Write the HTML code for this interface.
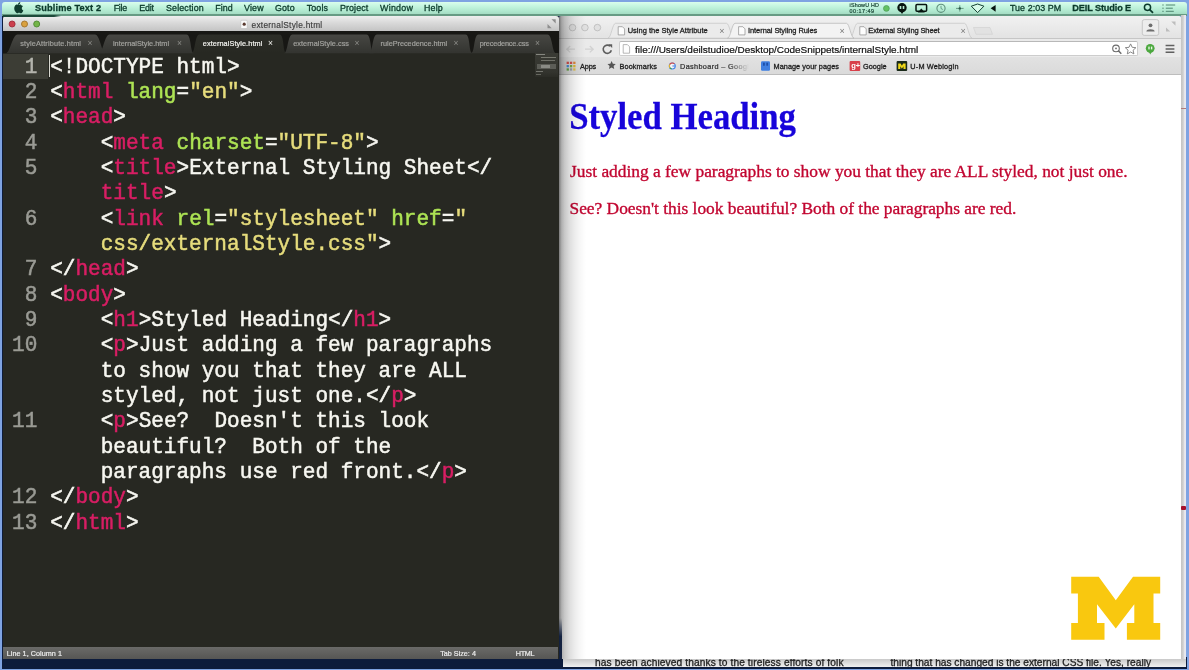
<!DOCTYPE html>
<html lang="en">
<head>
<meta charset="UTF-8">
<title>External Styling Sheet</title>
<style>
html,body{margin:0;padding:0}
body{width:1189px;height:670px;overflow:hidden;position:relative;background:#7ea2e2}
.t{position:absolute;white-space:pre;margin:0}
.b{position:absolute}
.sa{font-family:"Liberation Sans",sans-serif}
.se{font-family:"Liberation Serif",serif}
.mo{font-family:"Liberation Mono",monospace}
svg{position:absolute;overflow:visible}
#root{position:absolute;left:0;top:0;width:1189px;height:670px;overflow:hidden;filter:blur(0.62px)}
</style>
</head>
<body>
<div id="root">
<div class="b" style="left:0.00px;top:0.00px;width:1189.00px;height:670.00px;background:#7fa3e2"></div>
<div class="b" style="left:2.00px;top:15.00px;width:557.00px;height:653.50px;background:#0d1c3c"></div>
<div class="b" style="left:556.00px;top:657.00px;width:631.00px;height:11.50px;background:#0d1c3c"></div>
<div class="b" style="left:2.00px;top:2.00px;width:1185.00px;height:12.30px;background:linear-gradient(#dafdec 0%,#c4f5df 35%,#b0e8cf 75%,#a4dcc3 100%);border-bottom:2.6px solid #679b84;border-radius:3px 3px 0 0"></div>
<div class="b" style="left:3.30px;top:16.00px;width:556.00px;height:643.00px;background:#272822;border-radius:3px 3px 0 0"></div>
<div class="b" style="left:3.30px;top:16.00px;width:555.40px;height:15.00px;background:linear-gradient(#efefef,#d9d9d9 45%,#c4c4c4);border-radius:3px 3px 0 0"></div>
<div class="b" style="left:3.30px;top:31.00px;width:556.00px;height:22.00px;background:#171714"></div>
<div class="b" style="left:3.30px;top:53.00px;width:556.00px;height:594.00px;background:#272822"></div>
<div class="b" style="left:3.30px;top:647.00px;width:555.20px;height:12.00px;background:linear-gradient(#6a6a68,#565654)"></div>
<div class="b" style="left:558.50px;top:16.00px;width:622.50px;height:642.50px;background:#fff;border-radius:3px 3px 0 0"></div>
<div class="b" style="left:558.50px;top:16.00px;width:622.50px;height:22.00px;background:linear-gradient(#f1f1f1,#e3e3e3);border-radius:3px 3px 0 0"></div>
<div class="b" style="left:558.50px;top:37.60px;width:622.50px;height:18.90px;background:#eaeaea;border-top:1px solid #c6c6c6"></div>
<div class="b" style="left:558.50px;top:56.50px;width:622.50px;height:17.00px;background:linear-gradient(#e2e2e2,#dadada);border-bottom:1px solid #bdbdbd"></div>
<div class="b" style="left:1180.70px;top:15.00px;width:5.60px;height:651.50px;background:linear-gradient(90deg,#c4c4c4 0%,#cfcfcf 45%,#e4e4ea 62%,#ebebf1 100%)"></div>
<div class="b" style="left:1180.80px;top:505.90px;width:5.50px;height:4.00px;background:#a5122d;border-radius:1px"></div>
<div class="b" style="left:1181.00px;top:107.60px;width:5.30px;height:1.80px;background:#b07a7a"></div>
<div class="b" style="left:563.00px;top:659.00px;width:623.00px;height:7.80px;background:linear-gradient(#c9c9c9,#f0f0f0)"></div>
<div class="b" style="left:3.30px;top:53.50px;width:45.00px;height:25.00px;background:#3c3d35"></div>
<div class="b" style="left:49.30px;top:55.00px;width:1.00px;height:22.00px;background:#d8d8d0"></div>
<div class="t mo" style="left:24.67px;top:54.79px;font-size:21.05px;line-height:25px;color:#b4b5ad;letter-spacing:-0.002px;transform-origin:0 18.11px;transform:scaleY(1.06);-webkit-text-stroke:0.5px;">1</div>
<div class="t mo" style="left:50.20px;top:54.79px;font-size:21.05px;line-height:25px;color:#f7f7f1;letter-spacing:-0.002px;transform-origin:0 18.11px;transform:scaleY(1.06);-webkit-text-stroke:0.5px;"><span style="color:#f7f7f1">&lt;!DOCTYPE html&gt;</span></div>
<div class="t mo" style="left:24.67px;top:80.13px;font-size:21.05px;line-height:25px;color:#9a9b95;letter-spacing:-0.002px;transform-origin:0 18.11px;transform:scaleY(1.06);-webkit-text-stroke:0.5px;">2</div>
<div class="t mo" style="left:50.20px;top:80.13px;font-size:21.05px;line-height:25px;color:#f7f7f1;letter-spacing:-0.002px;transform-origin:0 18.11px;transform:scaleY(1.06);-webkit-text-stroke:0.5px;"><span style="color:#f7f7f1">&lt;</span><span style="color:#d81e64">html</span><span style="color:#f7f7f1"> </span><span style="color:#ade354">lang</span><span style="color:#f7f7f1">=</span><span style="color:#e6dc7c">"en"</span><span style="color:#f7f7f1">&gt;</span></div>
<div class="t mo" style="left:24.67px;top:105.46px;font-size:21.05px;line-height:25px;color:#9a9b95;letter-spacing:-0.002px;transform-origin:0 18.11px;transform:scaleY(1.06);-webkit-text-stroke:0.5px;">3</div>
<div class="t mo" style="left:50.20px;top:105.46px;font-size:21.05px;line-height:25px;color:#f7f7f1;letter-spacing:-0.002px;transform-origin:0 18.11px;transform:scaleY(1.06);-webkit-text-stroke:0.5px;"><span style="color:#f7f7f1">&lt;</span><span style="color:#d81e64">head</span><span style="color:#f7f7f1">&gt;</span></div>
<div class="t mo" style="left:24.67px;top:130.80px;font-size:21.05px;line-height:25px;color:#9a9b95;letter-spacing:-0.002px;transform-origin:0 18.11px;transform:scaleY(1.06);-webkit-text-stroke:0.5px;">4</div>
<div class="t mo" style="left:100.72px;top:130.80px;font-size:21.05px;line-height:25px;color:#f7f7f1;letter-spacing:-0.002px;transform-origin:0 18.11px;transform:scaleY(1.06);-webkit-text-stroke:0.5px;"><span style="color:#f7f7f1">&lt;</span><span style="color:#d81e64">meta</span><span style="color:#f7f7f1"> </span><span style="color:#ade354">charset</span><span style="color:#f7f7f1">=</span><span style="color:#e6dc7c">"UTF-8"</span><span style="color:#f7f7f1">&gt;</span></div>
<div class="t mo" style="left:24.67px;top:156.13px;font-size:21.05px;line-height:25px;color:#9a9b95;letter-spacing:-0.002px;transform-origin:0 18.11px;transform:scaleY(1.06);-webkit-text-stroke:0.5px;">5</div>
<div class="t mo" style="left:100.72px;top:156.13px;font-size:21.05px;line-height:25px;color:#f7f7f1;letter-spacing:-0.002px;transform-origin:0 18.11px;transform:scaleY(1.06);-webkit-text-stroke:0.5px;"><span style="color:#f7f7f1">&lt;</span><span style="color:#d81e64">title</span><span style="color:#f7f7f1">&gt;External Styling Sheet&lt;/</span></div>
<div class="t mo" style="left:100.72px;top:181.47px;font-size:21.05px;line-height:25px;color:#f7f7f1;letter-spacing:-0.002px;transform-origin:0 18.11px;transform:scaleY(1.06);-webkit-text-stroke:0.5px;"><span style="color:#d81e64">title</span><span style="color:#f7f7f1">&gt;</span></div>
<div class="t mo" style="left:24.67px;top:206.80px;font-size:21.05px;line-height:25px;color:#9a9b95;letter-spacing:-0.002px;transform-origin:0 18.11px;transform:scaleY(1.06);-webkit-text-stroke:0.5px;">6</div>
<div class="t mo" style="left:100.72px;top:206.80px;font-size:21.05px;line-height:25px;color:#f7f7f1;letter-spacing:-0.002px;transform-origin:0 18.11px;transform:scaleY(1.06);-webkit-text-stroke:0.5px;"><span style="color:#f7f7f1">&lt;</span><span style="color:#d81e64">link</span><span style="color:#f7f7f1"> </span><span style="color:#ade354">rel</span><span style="color:#f7f7f1">=</span><span style="color:#e6dc7c">"stylesheet"</span><span style="color:#f7f7f1"> </span><span style="color:#ade354">href</span><span style="color:#f7f7f1">=</span><span style="color:#e6dc7c">"</span></div>
<div class="t mo" style="left:100.72px;top:232.14px;font-size:21.05px;line-height:25px;color:#f7f7f1;letter-spacing:-0.002px;transform-origin:0 18.11px;transform:scaleY(1.06);-webkit-text-stroke:0.5px;"><span style="color:#e6dc7c">css/externalStyle.css"</span><span style="color:#f7f7f1">&gt;</span></div>
<div class="t mo" style="left:24.67px;top:257.47px;font-size:21.05px;line-height:25px;color:#9a9b95;letter-spacing:-0.002px;transform-origin:0 18.11px;transform:scaleY(1.06);-webkit-text-stroke:0.5px;">7</div>
<div class="t mo" style="left:50.20px;top:257.47px;font-size:21.05px;line-height:25px;color:#f7f7f1;letter-spacing:-0.002px;transform-origin:0 18.11px;transform:scaleY(1.06);-webkit-text-stroke:0.5px;"><span style="color:#f7f7f1">&lt;/</span><span style="color:#d81e64">head</span><span style="color:#f7f7f1">&gt;</span></div>
<div class="t mo" style="left:24.67px;top:282.81px;font-size:21.05px;line-height:25px;color:#9a9b95;letter-spacing:-0.002px;transform-origin:0 18.11px;transform:scaleY(1.06);-webkit-text-stroke:0.5px;">8</div>
<div class="t mo" style="left:50.20px;top:282.81px;font-size:21.05px;line-height:25px;color:#f7f7f1;letter-spacing:-0.002px;transform-origin:0 18.11px;transform:scaleY(1.06);-webkit-text-stroke:0.5px;"><span style="color:#f7f7f1">&lt;</span><span style="color:#d81e64">body</span><span style="color:#f7f7f1">&gt;</span></div>
<div class="t mo" style="left:24.67px;top:308.14px;font-size:21.05px;line-height:25px;color:#9a9b95;letter-spacing:-0.002px;transform-origin:0 18.11px;transform:scaleY(1.06);-webkit-text-stroke:0.5px;">9</div>
<div class="t mo" style="left:100.72px;top:308.14px;font-size:21.05px;line-height:25px;color:#f7f7f1;letter-spacing:-0.002px;transform-origin:0 18.11px;transform:scaleY(1.06);-webkit-text-stroke:0.5px;"><span style="color:#f7f7f1">&lt;</span><span style="color:#d81e64">h1</span><span style="color:#f7f7f1">&gt;Styled Heading&lt;/</span><span style="color:#d81e64">h1</span><span style="color:#f7f7f1">&gt;</span></div>
<div class="t mo" style="left:12.04px;top:333.48px;font-size:21.05px;line-height:25px;color:#9a9b95;letter-spacing:-0.002px;transform-origin:0 18.11px;transform:scaleY(1.06);-webkit-text-stroke:0.5px;">10</div>
<div class="t mo" style="left:100.72px;top:333.48px;font-size:21.05px;line-height:25px;color:#f7f7f1;letter-spacing:-0.002px;transform-origin:0 18.11px;transform:scaleY(1.06);-webkit-text-stroke:0.5px;"><span style="color:#f7f7f1">&lt;</span><span style="color:#d81e64">p</span><span style="color:#f7f7f1">&gt;Just adding a few paragraphs</span></div>
<div class="t mo" style="left:100.72px;top:358.81px;font-size:21.05px;line-height:25px;color:#f7f7f1;letter-spacing:-0.002px;transform-origin:0 18.11px;transform:scaleY(1.06);-webkit-text-stroke:0.5px;"><span style="color:#f7f7f1">to show you that they are ALL</span></div>
<div class="t mo" style="left:100.72px;top:384.15px;font-size:21.05px;line-height:25px;color:#f7f7f1;letter-spacing:-0.002px;transform-origin:0 18.11px;transform:scaleY(1.06);-webkit-text-stroke:0.5px;"><span style="color:#f7f7f1">styled, not just one.&lt;/</span><span style="color:#d81e64">p</span><span style="color:#f7f7f1">&gt;</span></div>
<div class="t mo" style="left:12.04px;top:409.48px;font-size:21.05px;line-height:25px;color:#9a9b95;letter-spacing:-0.002px;transform-origin:0 18.11px;transform:scaleY(1.06);-webkit-text-stroke:0.5px;">11</div>
<div class="t mo" style="left:100.72px;top:409.48px;font-size:21.05px;line-height:25px;color:#f7f7f1;letter-spacing:-0.002px;transform-origin:0 18.11px;transform:scaleY(1.06);-webkit-text-stroke:0.5px;"><span style="color:#f7f7f1">&lt;</span><span style="color:#d81e64">p</span><span style="color:#f7f7f1">&gt;See?  Doesn't this look</span></div>
<div class="t mo" style="left:100.72px;top:434.82px;font-size:21.05px;line-height:25px;color:#f7f7f1;letter-spacing:-0.002px;transform-origin:0 18.11px;transform:scaleY(1.06);-webkit-text-stroke:0.5px;"><span style="color:#f7f7f1">beautiful?  Both of the</span></div>
<div class="t mo" style="left:100.72px;top:460.15px;font-size:21.05px;line-height:25px;color:#f7f7f1;letter-spacing:-0.002px;transform-origin:0 18.11px;transform:scaleY(1.06);-webkit-text-stroke:0.5px;"><span style="color:#f7f7f1">paragraphs use red front.&lt;/</span><span style="color:#d81e64">p</span><span style="color:#f7f7f1">&gt;</span></div>
<div class="t mo" style="left:12.04px;top:485.49px;font-size:21.05px;line-height:25px;color:#9a9b95;letter-spacing:-0.002px;transform-origin:0 18.11px;transform:scaleY(1.06);-webkit-text-stroke:0.5px;">12</div>
<div class="t mo" style="left:50.20px;top:485.49px;font-size:21.05px;line-height:25px;color:#f7f7f1;letter-spacing:-0.002px;transform-origin:0 18.11px;transform:scaleY(1.06);-webkit-text-stroke:0.5px;"><span style="color:#f7f7f1">&lt;/</span><span style="color:#d81e64">body</span><span style="color:#f7f7f1">&gt;</span></div>
<div class="t mo" style="left:12.04px;top:510.82px;font-size:21.05px;line-height:25px;color:#9a9b95;letter-spacing:-0.002px;transform-origin:0 18.11px;transform:scaleY(1.06);-webkit-text-stroke:0.5px;">13</div>
<div class="t mo" style="left:50.20px;top:510.82px;font-size:21.05px;line-height:25px;color:#f7f7f1;letter-spacing:-0.002px;transform-origin:0 18.11px;transform:scaleY(1.06);-webkit-text-stroke:0.5px;"><span style="color:#f7f7f1">&lt;/</span><span style="color:#d81e64">html</span><span style="color:#f7f7f1">&gt;</span></div>
<div class="t se" style="left:569.20px;top:95.33px;font-size:34.8px;line-height:45.24px;color:#1804da;font-weight:bold;letter-spacing:-0.030px;-webkit-text-stroke:0.25px;transform-origin:0 34.37px;transform:scaleY(1.06);">Styled Heading</div>
<div class="t se" style="left:570.00px;top:160.22px;font-size:17.4px;line-height:22.62px;color:#c20631;letter-spacing:-0.007px;-webkit-text-stroke:0.35px;">Just adding a few paragraphs to show you that they are ALL styled, not just one.</div>
<div class="t se" style="left:569.50px;top:197.32px;font-size:17.4px;line-height:22.62px;color:#c20631;letter-spacing:-0.017px;-webkit-text-stroke:0.35px;">See? Doesn't this look beautiful? Both of the paragraphs are red.</div>
<svg width="1189" height="670" style="left:0;top:0"><polygon fill="#f9c80f" points="1071.2,576.8 1098.7,576.8 1115.8,600.3 1133.0,576.8 1160.2,576.8 1160.2,593.6 1153.5,593.6 1153.5,622.9 1160.2,622.9 1160.2,639.7 1126.9,639.7 1126.9,622.9 1134.3,622.9 1134.3,604.3 1115.8,628.5 1097.0,604.3 1097.0,622.9 1104.5,622.9 1104.5,639.7 1071.2,639.7 1071.2,622.9 1077.9,622.9 1077.9,593.6 1071.2,593.6"/></svg>
<div class="t sa" style="left:35.00px;top:3.03px;font-size:9.2px;line-height:11.96px;color:#0b3a2b;font-weight:bold;letter-spacing:0.141px;-webkit-text-stroke:0.3px;transform-origin:0 9.17px;transform:scaleY(0.98);">Sublime Text 2</div>
<div class="t sa" style="left:113.70px;top:3.33px;font-size:8.9px;line-height:11.57px;color:#0b3a2b;letter-spacing:-0.271px;-webkit-text-stroke:0.3px;transform-origin:0 8.87px;transform:scaleY(1.1);">File</div>
<div class="t sa" style="left:139.30px;top:3.33px;font-size:8.9px;line-height:11.57px;color:#0b3a2b;letter-spacing:-0.199px;-webkit-text-stroke:0.3px;transform-origin:0 8.87px;transform:scaleY(1.1);">Edit</div>
<div class="t sa" style="left:166.00px;top:3.33px;font-size:8.9px;line-height:11.57px;color:#0b3a2b;letter-spacing:0.148px;-webkit-text-stroke:0.3px;transform-origin:0 8.87px;transform:scaleY(1.1);">Selection</div>
<div class="t sa" style="left:215.20px;top:3.33px;font-size:8.9px;line-height:11.57px;color:#0b3a2b;letter-spacing:0.078px;-webkit-text-stroke:0.3px;transform-origin:0 8.87px;transform:scaleY(1.1);">Find</div>
<div class="t sa" style="left:244.10px;top:3.33px;font-size:8.9px;line-height:11.57px;color:#0b3a2b;letter-spacing:0.141px;-webkit-text-stroke:0.3px;transform-origin:0 8.87px;transform:scaleY(1.1);">View</div>
<div class="t sa" style="left:275.00px;top:3.33px;font-size:8.9px;line-height:11.57px;color:#0b3a2b;letter-spacing:0.117px;-webkit-text-stroke:0.3px;transform-origin:0 8.87px;transform:scaleY(1.1);">Goto</div>
<div class="t sa" style="left:306.70px;top:3.33px;font-size:8.9px;line-height:11.57px;color:#0b3a2b;letter-spacing:0.145px;-webkit-text-stroke:0.3px;transform-origin:0 8.87px;transform:scaleY(1.1);">Tools</div>
<div class="t sa" style="left:340.00px;top:3.33px;font-size:8.9px;line-height:11.57px;color:#0b3a2b;letter-spacing:0.096px;-webkit-text-stroke:0.3px;transform-origin:0 8.87px;transform:scaleY(1.1);">Project</div>
<div class="t sa" style="left:380.00px;top:3.33px;font-size:8.9px;line-height:11.57px;color:#0b3a2b;letter-spacing:0.264px;-webkit-text-stroke:0.3px;transform-origin:0 8.87px;transform:scaleY(1.1);">Window</div>
<div class="t sa" style="left:424.00px;top:3.33px;font-size:8.9px;line-height:11.57px;color:#0b3a2b;letter-spacing:0.145px;-webkit-text-stroke:0.3px;transform-origin:0 8.87px;transform:scaleY(1.1);">Help</div>
<div class="t sa" style="left:1009.90px;top:3.33px;font-size:8.9px;line-height:11.57px;color:#0b3a2b;letter-spacing:0.082px;-webkit-text-stroke:0.3px;transform-origin:0 8.87px;transform:scaleY(1.1);">Tue 2:03 PM</div>
<div class="t sa" style="left:1072.30px;top:3.03px;font-size:9.2px;line-height:11.96px;color:#0b3a2b;font-weight:bold;letter-spacing:-0.140px;-webkit-text-stroke:0.3px;transform-origin:0 9.17px;transform:scaleY(0.98);">DEIL Studio E</div>
<div class="t sa" style="left:849.50px;top:2.22px;font-size:5.4px;line-height:7.02px;color:#1d4838;letter-spacing:0.205px;-webkit-text-stroke:0.2px;">iShowU HD</div>
<div class="t sa" style="left:849.50px;top:8.02px;font-size:5.4px;line-height:7.02px;color:#1d4838;letter-spacing:0.502px;-webkit-text-stroke:0.2px;">00:17:49</div>
<svg width="1189" height="670" style="left:0;top:0"><path fill="#0f3d2e" d="M19.2,5.3c-1,-.1 -1.7,.5 -2.2,.5c-.5,0 -1.2,-.5 -2,-.5c-1.1,0 -2.1,.7 -2.6,1.7c-1.1,1.9 -.3,4.7 .8,6.2c.5,.7 1.1,1.5 1.9,1.5c.8,0 1.1,-.5 2,-.5c.9,0 1.2,.5 2,.5c.8,0 1.3,-.7 1.8,-1.4c.6,-.8 .8,-1.6 .8,-1.6c0,0 -1.6,-.6 -1.6,-2.4c0,-1.5 1.2,-2.2 1.3,-2.3c-.7,-1 -1.7,-1.1 -2.2,-1.1zM18.4,2.6c-.8,.1 -1.6,.6 -2,1.300c-.4,.6 -.5,1.2 -.4,1.600c.8,0 1.500,-.4 2,-1.100c.4,-.6 .5,-1.200 .4,-1.800z" transform="translate(3.3,-0.3) scale(0.92)"/><circle cx="886.4" cy="8.4" r="2.9" fill="#62c262" stroke="#4a9a58" stroke-width="0.7"/><circle cx="902" cy="7.8" r="4.7" fill="#06140f"/><path d="M900.5,11.5l1.5,2.5l1.5,-2.5z" fill="#06140f"/><rect x="899.7" y="6" width="1.6" height="3" fill="#b8ecd4"/><rect x="902.7" y="6" width="1.6" height="3" fill="#b8ecd4"/><rect x="916" y="4.6" width="10.6" height="6.6" rx="1" fill="none" stroke="#06140f" stroke-width="1.5"/><path d="M917.8,12.6l3.5,-4l3.5,4z" fill="#06140f"/><circle cx="941" cy="8.3" r="4.1" fill="none" stroke="#5f917d" stroke-width="1.1"/><path d="M941,5.8v2.7l1.8,1" fill="none" stroke="#5f917d" stroke-width="0.9"/><path d="M956,8.4h7.6M959.8,5.2v6.4" stroke="#5c8e7a" stroke-width="0.9" fill="none"/><circle cx="959.8" cy="8.4" r="1.2" fill="#2a5a48"/><path d="M971.3,6.2l6.3,-2.2l6.3,2.2l-6.3,6.4z" fill="#d8fbea" stroke="#123f30" stroke-width="1"/><path d="M990.6,8.3l5,-3.4v6.8z" fill="#06140f"/><circle cx="1147.5" cy="7.3" r="3.1" fill="none" stroke="#0b3a2b" stroke-width="1.5"/><path d="M1149.7,9.6l3.3,3.2" stroke="#0b3a2b" stroke-width="1.8"/><path d="M1162.4,5h1.2M1162.4,8.2h1.200M1162.4,11.3h1.200" stroke="#3e725e" stroke-width="1"/><path d="M1165.8,5h9.4M1165.800,8.2h7M1165.8,11.3h8" stroke="#4f8670" stroke-width="1"/></svg>
<div class="b" style="left:3.00px;top:14.60px;width:58.00px;height:2.50px;background:linear-gradient(90deg,#1d4a3a 0%,#1d4a3a 88%,rgba(29,74,58,0) 100%)"></div>
<svg width="1189" height="670" style="left:0;top:0"><circle cx="12.1" cy="24" r="3" fill="#cc3f4d" stroke="#a02c3a" stroke-width="0.9"/><circle cx="24.5" cy="24" r="3" fill="#d9a13f" stroke="#a0722a" stroke-width="0.9"/><circle cx="36.7" cy="24" r="3" fill="#74b548" stroke="#4e8832" stroke-width="0.9"/><rect x="240.8" y="20.3" width="6.4" height="8.2" rx="1" fill="#fafafa" stroke="#b5b5b5" stroke-width="0.5"/><circle cx="244.2" cy="24.2" r="1.6" fill="#5a3a30"/><path d="M551.5,19.3h4.2v4.2zM547.5,28.3h4.2l-4.2,-4.2z" fill="#8e8e8e"/></svg>
<div class="t sa" style="left:251.50px;top:19.53px;font-size:8.3px;line-height:10.79px;color:#3c3c3c;letter-spacing:0.279px;-webkit-text-stroke:0.15px;">externalStyle.html</div>
<svg width="1189" height="670" style="left:0;top:0"><defs><linearGradient id="tg" x1="0" y1="0" x2="0" y2="1"><stop offset="0" stop-color="#474743"/><stop offset="1" stop-color="#333430"/></linearGradient><linearGradient id="ta" x1="0" y1="0" x2="0" y2="1"><stop offset="0" stop-color="#2d2e28"/><stop offset="1" stop-color="#272822"/></linearGradient></defs><path d="M471,53.2C475,53.2 473.5,34.6 478.5,34.6L547.5,34.6C552.5,34.6 552,53.2 556,53.2z" fill="url(#tg)"/><path d="M369,53.2C373,53.2 372,34.6 377,34.6L465.5,34.6C470.5,34.6 468.5,53.2 472.5,53.2z" fill="url(#tg)"/><path d="M284,53.2C288,53.2 287.5,34.6 292.5,34.6L366.5,34.6C371.5,34.6 370,53.2 374,53.2z" fill="url(#tg)"/><path d="M99,53.2C103,53.2 104.5,34.6 109.5,34.6L186.5,34.6C191.5,34.6 190,53.2 194,53.2z" fill="url(#tg)"/><path d="M6,53.2C10,53.2 12.5,34.6 17.5,34.6L95,34.6C100,34.6 101.5,53.2 105.5,53.2z" fill="url(#tg)"/><path d="M191.5,53.2C195.5,53.2 194.5,34.6 199.5,34.6L279.5,34.6C284.5,34.6 282.5,53.2 286.5,53.2z" fill="url(#ta)"/></svg>
<div class="t sa" style="left:20.20px;top:38.73px;font-size:7.3px;line-height:9.49px;color:#a2a29e;letter-spacing:0.156px;-webkit-text-stroke:0.2px;transform-origin:0 7.27px;transform:scaleY(1.05);">styleAttribute.html</div>
<div class="t sa" style="left:87.40px;top:37.93px;font-size:8.5px;line-height:11.05px;color:#8c8c88;">×</div>
<div class="t sa" style="left:113.00px;top:38.73px;font-size:7.3px;line-height:9.49px;color:#a2a29e;letter-spacing:0.002px;-webkit-text-stroke:0.2px;transform-origin:0 7.27px;transform:scaleY(1.05);">internalStyle.html</div>
<div class="t sa" style="left:176.90px;top:37.93px;font-size:8.5px;line-height:11.05px;color:#8c8c88;">×</div>
<div class="t sa" style="left:202.80px;top:38.73px;font-size:7.3px;line-height:9.49px;color:#f4f4f0;letter-spacing:0.088px;-webkit-text-stroke:0.2px;transform-origin:0 7.27px;transform:scaleY(1.05);">externalStyle.html</div>
<div class="t sa" style="left:268.00px;top:37.93px;font-size:8.5px;line-height:11.05px;color:#f4f4f0;">×</div>
<div class="t sa" style="left:293.20px;top:38.73px;font-size:7.3px;line-height:9.49px;color:#a2a29e;letter-spacing:0.040px;-webkit-text-stroke:0.2px;transform-origin:0 7.27px;transform:scaleY(1.05);">externalStyle.css</div>
<div class="t sa" style="left:354.40px;top:37.93px;font-size:8.5px;line-height:11.05px;color:#8c8c88;">×</div>
<div class="t sa" style="left:380.60px;top:38.73px;font-size:7.3px;line-height:9.49px;color:#a2a29e;letter-spacing:-0.019px;-webkit-text-stroke:0.2px;transform-origin:0 7.27px;transform:scaleY(1.05);">rulePrecedence.html</div>
<div class="t sa" style="left:453.40px;top:37.93px;font-size:8.5px;line-height:11.05px;color:#8c8c88;">×</div>
<div class="t sa" style="left:479.70px;top:38.73px;font-size:7.3px;line-height:9.49px;color:#a2a29e;letter-spacing:-0.155px;-webkit-text-stroke:0.2px;transform-origin:0 7.27px;transform:scaleY(1.05);">precedence.css</div>
<div class="t sa" style="left:535.00px;top:37.93px;font-size:8.5px;line-height:11.05px;color:#8c8c88;">×</div>
<div class="b" style="left:535.00px;top:52.80px;width:22.50px;height:24.00px;background:linear-gradient(#3a3b35,#33342e 80%,#2b2c26)"></div>
<div class="b" style="left:535.50px;top:53.60px;width:9.00px;height:1.20px;background:#85867f"></div>
<div class="b" style="left:541.00px;top:57.00px;width:15.00px;height:1.10px;background:#77786f"></div>
<div class="b" style="left:541.00px;top:60.00px;width:13.50px;height:1.10px;background:#6f7068"></div>
<div class="b" style="left:537.00px;top:64.00px;width:19.00px;height:4.60px;background:#5c5d57"></div>
<div class="b" style="left:541.00px;top:65.00px;width:9.00px;height:2.60px;background:#8a8b85"></div>
<div class="b" style="left:535.50px;top:71.40px;width:7.00px;height:1.10px;background:#74756e"></div>
<div class="b" style="left:535.50px;top:74.20px;width:5.00px;height:1.00px;background:#66675f"></div>
<div class="t sa" style="left:6.70px;top:648.83px;font-size:7.2px;line-height:9.36px;color:#ededed;letter-spacing:0.064px;-webkit-text-stroke:0.2px;transform-origin:0 7.17px;transform:scaleY(1.05);">Line 1, Column 1</div>
<div class="t sa" style="left:440.20px;top:648.83px;font-size:7.2px;line-height:9.36px;color:#ededed;letter-spacing:0.014px;-webkit-text-stroke:0.2px;transform-origin:0 7.17px;transform:scaleY(1.05);">Tab Size: 4</div>
<div class="t sa" style="left:515.80px;top:648.83px;font-size:7.2px;line-height:9.36px;color:#ededed;letter-spacing:-0.326px;-webkit-text-stroke:0.2px;transform-origin:0 7.17px;transform:scaleY(1.05);">HTML</div>
<svg width="1189" height="670" style="left:0;top:0"><circle cx="572.5" cy="27.6" r="3.3" fill="#e0e0e0" stroke="#b9b9b9" stroke-width="0.8"/><circle cx="584.9" cy="27.6" r="3.3" fill="#e0e0e0" stroke="#b9b9b9" stroke-width="0.8"/><circle cx="597.4" cy="27.6" r="3.3" fill="#e0e0e0" stroke="#b9b9b9" stroke-width="0.8"/><path d="M608,38.2C611,38.2 612.5,23.3 615.5,23.3L726.5,23.3C729.5,23.3 731,38.2 734,38.2z" fill="#ebebeb" stroke="#c4c4c4" stroke-width="0.7"/><path d="M850,38.2C853,38.2 854.5,23.3 857.5,23.3L964.5,23.3C967.5,23.3 969,38.2 972,38.2z" fill="#ebebeb" stroke="#c4c4c4" stroke-width="0.7"/><path d="M727.5,38.2C730.5,38.2 732,23.3 735,23.3L846.5,23.3C849.5,23.3 851,38.2 854,38.2z" fill="#f3f3f3" stroke="#b4b4b4" stroke-width="0.7"/><path d="M973.5,27.5h16.5l2.5,6.8h-16.5z" fill="#e2e2e2" stroke="#cfcfcf" stroke-width="0.6"/><path d="M618.2,26.7h4.2l2.2,2.2v5.999999999999999h-6.4z" fill="#fdfdfd" stroke="#8a8a8a" stroke-width="0.7"/><path d="M738.6,26.7h4.2l2.2,2.2v5.999999999999999h-6.4z" fill="#fdfdfd" stroke="#8a8a8a" stroke-width="0.7"/><path d="M859.8,26.7h4.2l2.2,2.2v5.999999999999999h-6.4z" fill="#fdfdfd" stroke="#8a8a8a" stroke-width="0.7"/><rect x="1142.3" y="19.6" width="16.4" height="15.8" rx="2" fill="#ededed" stroke="#bdbdbd" stroke-width="0.8"/><circle cx="1150.5" cy="25.3" r="1.9" fill="#6e6e6e"/><path d="M1146.3,31.4c0,-3 8.4,-3 8.4,0z" fill="#6e6e6e"/><path d="M1171.3,21.6h4.2v4.2zM1166,31.6h4.2l-4.2,-4.2z" fill="#bdbdbd"/></svg>
<div class="t sa" style="left:627.70px;top:26.43px;font-size:7.5px;line-height:9.75px;color:#1e1e1e;letter-spacing:0.002px;-webkit-text-stroke:0.28px;transform-origin:0 7.47px;transform:scaleY(0.97);">Using the Style Attribute</div>
<div class="t sa" style="left:719.30px;top:25.53px;font-size:9px;line-height:11.7px;color:#7a7a7a;">×</div>
<div class="t sa" style="left:748.00px;top:26.43px;font-size:7.5px;line-height:9.75px;color:#1e1e1e;letter-spacing:-0.075px;-webkit-text-stroke:0.28px;transform-origin:0 7.47px;transform:scaleY(0.97);">Internal Styling Rules</div>
<div class="t sa" style="left:839.50px;top:25.53px;font-size:9px;line-height:11.7px;color:#7a7a7a;">×</div>
<div class="t sa" style="left:868.30px;top:26.43px;font-size:7.5px;line-height:9.75px;color:#1e1e1e;letter-spacing:-0.119px;-webkit-text-stroke:0.28px;transform-origin:0 7.47px;transform:scaleY(0.97);">External Styling Sheet</div>
<div class="t sa" style="left:960.50px;top:25.53px;font-size:9px;line-height:11.7px;color:#7a7a7a;">×</div>
<div class="b" style="left:619.00px;top:41.30px;width:519.00px;height:14.60px;background:#fff;border:1px solid #cdcdcd;border-top-color:#b8b8b8;border-radius:2px;box-sizing:border-box"></div>
<svg width="1189" height="670" style="left:0;top:0"><path d="M567,49.2h8M570.2,46l-3.4,3.2l3.4,3.2" fill="none" stroke="#d2d2d2" stroke-width="1.3"/><path d="M585,49.2h8M589.8,46l3.4,3.2l-3.4,3.2" fill="none" stroke="#d2d2d2" stroke-width="1.3"/><path d="M610.2,46.3a4.1,4.1 0 1 0 1.1,3.9" fill="none" stroke="#5e5e5e" stroke-width="1.6"/><path d="M608.3,44.2h3.9v3.9z" fill="#5e5e5e"/><path d="M623.2,44.6h4.2l2.2,2.2v6.3999999999999995h-6.4z" fill="#fdfdfd" stroke="#9a9a9a" stroke-width="0.7"/><circle cx="1116" cy="48.4" r="3.3" fill="none" stroke="#6a6a6a" stroke-width="1.1"/><path d="M1118.4,50.8l2.9,2.9" stroke="#6a6a6a" stroke-width="1.5"/><circle cx="1116" cy="48.4" r="0.9" fill="#6a6a6a"/><path d="M1130.6,43.9l1.6,3.4l3.7,.4l-2.8,2.5l.8,3.7l-3.3,-1.9l-3.3,1.9l.8,-3.700l-2.8,-2.500l3.700,-.4z" fill="#fff" stroke="#7a7a7a" stroke-width="0.9"/><circle cx="1150.2" cy="48.3" r="4.4" fill="#4ca83f"/><path d="M1148.7,51.800l1.600,2.700l1.500,-2.700z" fill="#4ca83f"/><rect x="1148.3" y="46.6" width="1.4" height="2.8" fill="#e8f6e4"/><rect x="1150.9" y="46.6" width="1.4" height="2.8" fill="#e8f6e4"/><path d="M1165.6,45.6h8.8M1165.6,48.9h8.8M1165.6,52.2h8.8" stroke="#5f5f5f" stroke-width="1.5"/></svg>
<div class="t sa" style="left:635.00px;top:42.53px;font-size:10.0px;line-height:13.0px;color:#101010;letter-spacing:-0.031px;-webkit-text-stroke:0.2px;transform-origin:0 9.96px;transform:scaleY(0.96);">file:///Users/deilstudioe/Desktop/CodeSnippets/internalStyle.html</div>
<div class="t sa" style="left:580.00px;top:61.73px;font-size:7.3px;line-height:9.49px;color:#1e1e1e;letter-spacing:-0.147px;-webkit-text-stroke:0.3px;transform-origin:0 7.27px;transform:scaleY(1.0);">Apps</div>
<div class="t sa" style="left:619.60px;top:61.73px;font-size:7.3px;line-height:9.49px;color:#1e1e1e;letter-spacing:0.087px;-webkit-text-stroke:0.3px;transform-origin:0 7.27px;transform:scaleY(1.0);">Bookmarks</div>
<div class="t sa" style="left:773.50px;top:61.73px;font-size:7.3px;line-height:9.49px;color:#1e1e1e;letter-spacing:0.062px;-webkit-text-stroke:0.3px;transform-origin:0 7.27px;transform:scaleY(1.0);">Manage your pages</div>
<div class="t sa" style="left:863.00px;top:61.73px;font-size:7.3px;line-height:9.49px;color:#1e1e1e;letter-spacing:0.014px;-webkit-text-stroke:0.3px;transform-origin:0 7.27px;transform:scaleY(1.0);">Google</div>
<div class="t sa" style="left:910.30px;top:61.73px;font-size:7.3px;line-height:9.49px;color:#1e1e1e;letter-spacing:0.191px;-webkit-text-stroke:0.3px;transform-origin:0 7.27px;transform:scaleY(1.0);">U-M Weblogin</div>
<div class="t sa" style="left:680.00px;top:61.73px;font-size:7.3px;line-height:9.49px;color:#2a2a2a;letter-spacing:0.356px;-webkit-text-stroke:0.2px;-webkit-mask-image:linear-gradient(90deg,#000 70%,transparent 100%);mask-image:linear-gradient(90deg,#000 70%,transparent 100%);transform-origin:0 7.27px;transform:scaleY(1.0);">Dashboard – Googl</div>
<svg width="1189" height="670" style="left:0;top:0"><g transform="translate(0,0.7)"><rect x="566.6" y="61.0" width="2.3" height="2.3" fill="#d9534f"/><rect x="569.9" y="61.0" width="2.3" height="2.3" fill="#d9534f"/><rect x="573.2" y="61.0" width="2.3" height="2.3" fill="#e08a3c"/><rect x="566.6" y="64.3" width="2.3" height="2.3" fill="#4a8fd8"/><rect x="569.9" y="64.3" width="2.3" height="2.3" fill="#7aa84a"/><rect x="573.2" y="64.3" width="2.3" height="2.3" fill="#e0b83c"/><rect x="566.6" y="67.6" width="2.3" height="2.3" fill="#6aa84a"/><rect x="569.9" y="67.6" width="2.3" height="2.3" fill="#9aa0a8"/><rect x="573.2" y="67.6" width="2.3" height="2.3" fill="#e0c050"/><path d="M611.6,60.400l1.250,2.650l2.900,.35l-2.150,1.950l.6,2.900l-2.600,-1.500l-2.600,1.500l.6,-2.900l-2.150,-1.950l2.900,-.35z" fill="#555"/><circle cx="672.3" cy="65.3" r="3" fill="#f4f4f4" stroke="#4a86e8" stroke-width="1.1"/><path d="M669.7,63.800a3,3 0 0 1 4.700,-.7" fill="none" stroke="#e04a3c" stroke-width="1.1"/><path d="M669.9,67.200a3,3 0 0 1 -.2,-3.400" fill="none" stroke="#f0b820" stroke-width="1.1"/><path d="M671.6,68.200a3,3 0 0 1 -1.700,-1" fill="none" stroke="#3ca050" stroke-width="1.1"/><path d="M672.4,65.300h3" stroke="#4a86e8" stroke-width="1.1"/><rect x="761" y="60.6" width="9" height="9.4" rx="1.2" fill="#3f7fe0"/><rect x="763" y="62" width="1.8" height="3" fill="#1d4fa8"/><rect x="766.3" y="62" width="1.800" height="3" fill="#1d4fa8"/><rect x="849.6" y="60.4" width="10.6" height="10" rx="1" fill="#d8404a"/><rect x="896.6" y="60.400" width="10.600" height="10" rx="1" fill="#1a2a1a"/><path d="M898.2,62.700h2.400l1.300,2.300l1.300,-2.300h2.400v5.600h-2.100v-2.800l-1.600,2.500l-1.600,-2.500v2.800h-2.100z" fill="#f0d818"/></g></svg>
<div class="t sa" style="left:851.20px;top:61.43px;font-size:7.5px;line-height:9.75px;color:#fff;font-weight:bold;">g+</div>
<div class="b" style="left:563px;top:659px;width:623px;height:7.8px;overflow:hidden"><div class="t sa" style="left:32.00px;top:-3.06px;font-size:10.2px;line-height:13.26px;color:#1f1f1f;letter-spacing:0.104px;-webkit-text-stroke:0.3px;">has been achieved thanks to the tireless efforts of folk</div>
<div class="t sa" style="left:327.50px;top:-3.06px;font-size:10.2px;line-height:13.26px;color:#1f1f1f;letter-spacing:-0.010px;-webkit-text-stroke:0.3px;">thing that has changed is the external CSS file. Yes, really</div>
</div>
<div class="b" style="left:559.20px;top:16.00px;width:28.00px;height:643.00px;background:linear-gradient(90deg,rgba(0,0,0,.52) 0%,rgba(0,0,0,.31) 9.6%,rgba(0,0,0,.215) 20.4%,rgba(0,0,0,.13) 38.2%,rgba(0,0,0,.075) 56%,rgba(0,0,0,.035) 74%,rgba(0,0,0,0) 96%)"></div>
<div class="b" style="left:558.50px;top:618.00px;width:3.20px;height:41.00px;background:linear-gradient(rgba(13,28,60,0),rgba(13,28,60,.95) 45%)"></div>
</div>
</body>
</html>
